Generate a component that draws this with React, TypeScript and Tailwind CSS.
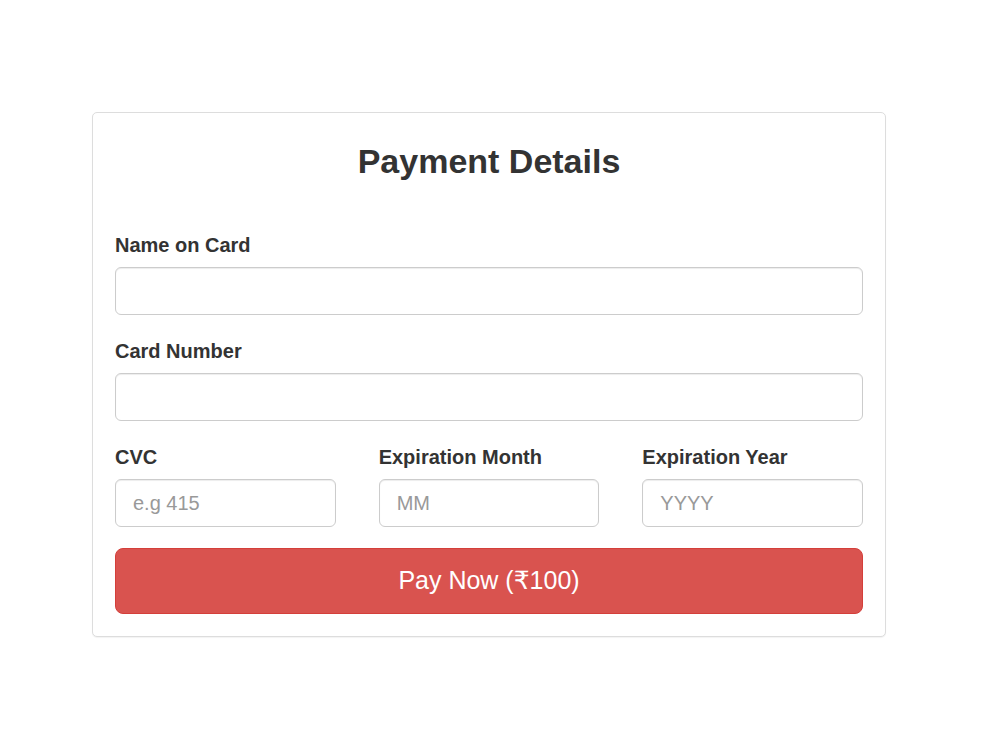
import { useState } from 'react'

const font = { fontFamily: '"Liberation Sans", "DejaVu Sans", Arial, sans-serif' }

const inputClass =
  'block w-full h-[48px] rounded-[6px] border border-[#ccc] bg-white px-[17px] text-[20px] text-[#555] placeholder:text-[#999] shadow-[inset_0_1px_1px_rgba(0,0,0,0.075)] outline-none focus:border-[#66afe9]'

const Field = ({
  label,
  placeholder,
  className = '',
}: {
  label: string
  placeholder?: string
  className?: string
}) => {
  const [value, setValue] = useState('')
  return (
    <div className={className}>
      <label className="block h-[30px] leading-[30px] mb-[7px] text-[20px] font-bold text-[#333]">
        {label}
      </label>
      <input
        type="text"
        value={value}
        placeholder={placeholder}
        onChange={(e) => setValue(e.target.value)}
        className={inputClass}
      />
    </div>
  )
}

export default function App() {
  return (
    <div className="min-h-screen bg-white pt-[112px]" style={font}>
      <div className="ml-[92px] w-[794px] rounded-[5px] border border-[#ddd] bg-white px-[22px] pt-[29px] pb-[22px] shadow-[0_1px_1px_rgba(0,0,0,0.05)]">
        {/* Heading */}
        <h3 className="h-[38px] leading-[38px] text-center text-[34px] font-bold text-[#333] mb-[50px]">
          Payment Details
        </h3>

        <form onSubmit={(e) => e.preventDefault()}>
          <Field label="Name on Card" className="mb-[21px]" />
          <Field label="Card Number" className="mb-[21px]" />

          {/* CVC / expiry row */}
          <div className="grid grid-cols-3 gap-x-[43px] mb-[21px]">
            <Field label="CVC" placeholder="e.g 415" />
            <Field label="Expiration Month" placeholder="MM" />
            <Field label="Expiration Year" placeholder="YYYY" />
          </div>

          <button
            type="submit"
            className="block w-full h-[66px] rounded-[8px] border border-[#d43f3a] bg-[#d9534f] text-[25px] text-white hover:bg-[#c9302c]"
          >
            Pay Now (₹100)
          </button>
        </form>
      </div>
    </div>
  )
}
